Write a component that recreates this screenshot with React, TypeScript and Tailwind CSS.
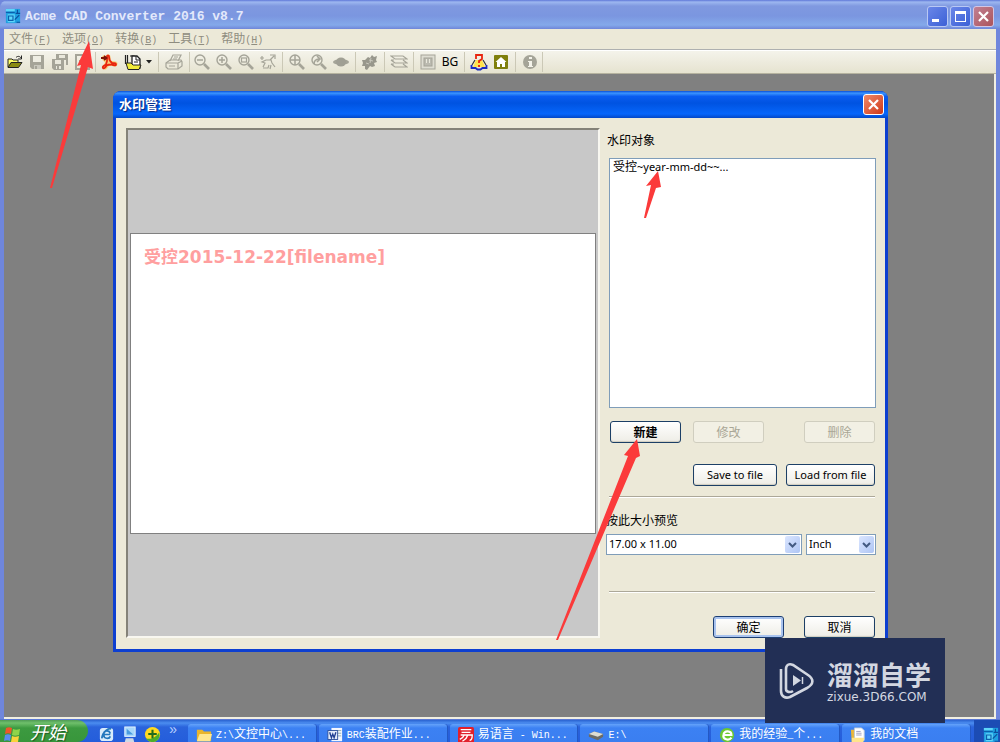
import React from "react";

const SONG = "font-['Liberation_Mono','Noto_Sans_CJK_SC',monospace]";
const UI = "font-['Noto_Sans','Noto_Sans_CJK_SC',sans-serif]";

function Icon({ children, size = 18 }: { children: React.ReactNode; size?: number }) {
  return (
    <svg width={size} height={size} viewBox="0 0 18 18" fill="none" className="shrink-0" aria-hidden="true">
      {children}
    </svg>
  );
}

const G = "#a5a498";

function AppLogo() {
  return (
    <Icon size={16}>
      <path d="M1 1h16v16H1z" fill="#1f9fe0" />
      <path d="M1 1h10v3H1zM3 7h8v9H3z" fill="#5fd6fa" />
      <path d="M1 5h10M4 9h5v5H4z" stroke="#0b5fae" strokeWidth="1.300" />
      <path d="M12 6h5M14 2v4M11 13l5-5M13 16h4" stroke="#0b4f9e" strokeWidth="1.300" />
    </Icon>
  );
}

const OpenIcon = () => (
  <Icon>
    <path d="M2 14V6h4l1 1h5v3" fill="#ffff66" stroke="#222" />
    <path d="M2 14.500l3-5h11l-3.500 5z" fill="#8a8a10" stroke="#222" />
    <path d="M10 4.500c2-2 4-1 5 .5M15.500 2.500V6H12" stroke="#222" />
  </Icon>
);
const SaveIcon = () => (
  <Icon>
    <path d="M2 2h14v14H4l-2-2z" fill={G} />
    <path d="M5 3h8v6H5z" fill="#eeede2" />
    <path d="M6 12h7v4H6z" fill="#c9c8bd" />
    <path d="M7 13h2v3H7z" fill={G} />
  </Icon>
);
const SaveAllIcon = () => (
  <Icon>
    <path d="M5 1h12v11h-2V7H5z" fill={G} />
    <path d="M8 2h6v3H8z" fill="#e9e8dc" />
    <path d="M1 6h12v11H3l-2-2z" fill={G} />
    <path d="M4 7h6v4H4zM5 13h5v3H5z" fill="#e9e8dc" />
    <path d="M6 13h2v3H6z" fill={G} />
  </Icon>
);
const ExportIcon = () => (
  <Icon>
    <path d="M2 2h9l4 4v10H2z" stroke={G} strokeWidth="2" />
    <path d="M5 8h5v5" stroke={G} strokeWidth="2" />
  </Icon>
);
const PdfIcon = () => (
  <Icon>
    <path d="M4 5l5 5 6 1M8 10l-3 4M8 9V4" stroke="#ffc04a" strokeWidth="5" strokeLinecap="round" opacity=".7" />
    <path d="M7 3.500c0-1.500 2-1.500 2 0 0 3 1 5 3 6.500 2 0 4 0 4 1.500s-2.500 1-4.500 0c-2 0-3.500 0-5 1-1 2-2.500 3.500-3.500 2.500s1-2.500 3-3.500c1-2 1.500-4 1-8z" stroke="#e8240f" strokeWidth="1.800" />
    <path d="M1 5h4M4 3l2.500 2L4 7" stroke="#7c1206" strokeWidth="1.800" />
  </Icon>
);
const BatchIcon = () => (
  <Icon>
    <path d="M1.500 2v9M3.500 2v10M6 3h4v10" stroke="#222" strokeWidth="1.200" />
    <path d="M8 3h5l3 3v9H8z" fill="#fff" stroke="#222" strokeWidth="1.300" />
    <path d="M12 3v4h4" stroke="#222" />
    <path d="M2 10h5l2 2h8l-2 4.500H4z" fill="#f1ec3b" stroke="#222" />
    <path d="M10 9h4" stroke="#222" />
  </Icon>
);
const PrintIcon = () => (
  <Icon>
    <path d="M5 8l3-6h8l-3 6M1 10l4-3h11l1 2v4l-4 3H3l-2-2z" stroke={G} strokeWidth="1.200" />
    <path d="M1 10h12v6M13 10l4-2" stroke={G} strokeWidth="1.200" />
    <path d="M9 4h4M8 6h4M4 13h6" stroke={G} />
  </Icon>
);
function Lens({ children }: { children?: React.ReactNode }) {
  return (
    <Icon>
      <circle cx="7" cy="7" r="5" stroke={G} strokeWidth="1.400" />
      <path d="M11 11l5 5" stroke={G} strokeWidth="2.600" />
      {children}
    </Icon>
  );
}
const PanIcon = () => (
  <Icon>
    <path d="M1 5h4M3 3v4M11 2h5v4M15 3l-4 4M4 14l2-4-3-1 4-2 5 0 1 3 3 4M4 15h5l1-3M12 12l-1 4" stroke={G} strokeWidth="1.200" />
  </Icon>
);
const OrbitIcon = () => (
  <Icon>
    <ellipse cx="9" cy="9" rx="8" ry="3" fill={G} />
    <ellipse cx="9" cy="9" rx="5" ry="4.500" fill="#a09f94" />
  </Icon>
);
const RegenIcon = () => (
  <Icon>
    <path d="M7 4l2 1 2-3 2 2 3-1-1 4 1 2-3 1 1 3-3 1-2-1-3 4-2-1 0-3-3 0 1-3-1-3 3 0z" fill="#98978c" />
    <path d="M8 7l4 1M10 5l-1 5M5 10l3 1" stroke="#c8c7bc" />
  </Icon>
);
const LayersIcon = () => (
  <Icon>
    <path d="M1 3h12l4 3H5zM1 7h3M1 11h3M5 10h12l-4-3M5 14h12l-4-3M1 7l4 3M1 11l4 3" stroke={G} strokeWidth="1.200" />
  </Icon>
);
const FrameIcon = () => (
  <Icon>
    <rect x="2" y="2" width="14" height="14" fill="#deddd2" stroke={G} />
    <rect x="5" y="5" width="8" height="8" fill="#bbbab0" stroke={G} />
    <path d="M7.500 6v4M10.500 6v4" stroke="#e9e8dc" />
  </Icon>
);
const RegisterIcon = () => (
  <Icon>
    <path d="M3 14l3-7h6l3 7z" fill="#ffe34d" />
    <path d="M5 7l-3 5M13 7l3 5" stroke="#333" strokeWidth="1.200" />
    <path d="M6 6V2h6v4L9 8v2M9 12v2" stroke="#e8240f" strokeWidth="1.800" />
    <path d="M1.500 12v3h4l2 1.500h3l2-1.500h4v-3" stroke="#1b2cc0" strokeWidth="1.800" />
  </Icon>
);
const HomeIcon = () => (
  <Icon>
    <rect x="2" y="2" width="14" height="14" rx="1" fill="#7f7f0c" />
    <path d="M9 4l5.500 5H13v5h-3v-3H8v3H5V9H3.500z" fill="#fff" />
  </Icon>
);
const InfoIcon = () => (
  <Icon>
    <circle cx="9" cy="9" r="7" fill={G} />
    <path d="M8 4h3v2H8zM7 8h4v5h1v1H7v-1h1V9H7z" fill="#f4f3ea" />
  </Icon>
);

function Tool({ label, wide, children }: { label: string; wide?: string; children: React.ReactNode }) {
  return (
    <button type="button" aria-label={label} className={`flex h-full shrink-0 items-center justify-center ${wide ?? "w-[22px]"}`}>
      {children}
    </button>
  );
}
const Sep = ({ tight }: { tight?: boolean }) => (
  <span className={`h-5 w-px shrink-0 bg-[#cbc8b6] ${tight ? "mx-px" : "mx-[3px]"}`} />
);

function MenuItem({ text, hot }: { text: string; hot: string }) {
  return (
    <button type="button" className="flex items-baseline">
      <span className="text-xs">{text}</span>
      <span className="text-[10px]">
        (<u>{hot}</u>)
      </span>
    </button>
  );
}

function Btn({ children, kind = "normal", width }: { children: React.ReactNode; kind?: "normal" | "hot" | "disabled"; width: string }) {
  const look =
    kind === "disabled"
      ? "border-[#d0cebf] bg-[#f2f0e4] text-[#a9a695]"
      : kind === "hot"
        ? "border-[#1c3f75] bg-gradient-to-b from-white to-[#eeede6] text-black shadow-[inset_0_0_0_2px_#a9c3ee]"
        : "border-[#1c3f66] bg-gradient-to-b from-white to-[#eeede6] text-black shadow-[inset_0_-1px_1px_#d0ccbf]";
  return (
    <button
      type="button"
      disabled={kind === "disabled"}
      className={`flex h-[22px] shrink-0 items-center justify-center rounded-[3px] border pt-px ${look} ${width}`}
    >
      {children}
    </button>
  );
}

function Combo({ id, label, value, grow }: { id: string; label: string; value: string; grow?: boolean }) {
  return (
    <div className={`relative h-[21px] ${grow ? "flex-1" : "w-[70px]"}`}>
      <select
        id={id}
        aria-label={label}
        className="h-full w-full appearance-none rounded-none border border-[#7f9db9] bg-white pr-5 pl-[2px] text-[11px] text-black"
      >
        <option>{value}</option>
      </select>
      <span className="pointer-events-none absolute top-[2px] right-[2px] flex h-[17px] w-[15px] items-center justify-center rounded-[2px] bg-gradient-to-br from-[#dbe6ff] to-[#aec5f4]">
        <svg width="9" height="6" viewBox="0 0 9 6" fill="none">
          <path d="M1 1l3.500 3.500L8 1" stroke="#435a82" strokeWidth="2" />
        </svg>
      </span>
    </div>
  );
}

const Rule = () => <hr className="mr-px ml-[3px] h-[2px] border-0 border-t border-b border-t-[#aca899] border-b-white" />;

function Close({ active }: { active?: boolean }) {
  return (
    <button
      type="button"
      aria-label="关闭"
      className={`flex size-[21px] items-center justify-center rounded-[3px] border ${
        active ? "border-white bg-gradient-to-br from-[#f08868] to-[#cf3512]" : "border-[#d3c6e4] bg-gradient-to-br from-[#c08094] to-[#ac545a]"
      }`}
    >
      <svg width="13" height="13" viewBox="0 0 13 13">
        <path d="M2 2l9 9M11 2l-9 9" stroke="#fff" strokeWidth="2.200" />
      </svg>
    </button>
  );
}

function Dialog() {
  return (
    <section className={`flex h-[561px] w-full max-w-[775px] flex-col rounded-t-lg bg-[#0d3fd0] ${UI}`}>
      <header className="flex h-[27px] shrink-0 items-center justify-between rounded-t-lg bg-[linear-gradient(180deg,#0a4fd8_0%,#3a94ff_8%,#0a5cf0_20%,#0053e1_45%,#0666fb_85%,#0347c6_100%)] pr-[4px] pl-[6px]">
        <h2 className="text-[13px] leading-none font-bold text-white [text-shadow:1px_1px_1px_#0a2a80]">水印管理</h2>
        <Close active />
      </header>
      <div className="mx-[3px] mb-[3px] flex min-h-0 flex-1 bg-[#ece9d8] pt-[10px] pr-[9px] pb-[11px] pl-[10px] text-xs text-black">
        <div className="flex min-w-0 flex-1 flex-col justify-center border-2 border-t-[#848278] border-r-[#f8f7f0] border-b-[#f8f7f0] border-l-[#848278] bg-[#c8c8c8] px-[2px]">
          <div className="h-[301px] border border-[#808080] bg-white px-[13px] pt-[10px]">
            <p className="font-['DejaVu_Sans','Noto_Sans_CJK_SC',sans-serif] text-[17px] leading-[26px] font-bold whitespace-nowrap text-[#ff9f9f]">
              受控2015-12-22[filename]
            </p>
          </div>
        </div>
        <div className="ml-[6px] flex w-[270px] shrink-0 flex-col">
          <h3 id="objects" className="mt-[5px] ml-px leading-4">
            水印对象
          </h3>
          <ul aria-labelledby="objects" className="mt-[9px] ml-[3px] h-[250px] border border-[#7f9db9] bg-white px-[3px]">
            <li className="text-[11px] leading-4">
              <span className="text-xs">受控</span>~year-mm-dd~~...
            </li>
          </ul>
          <div className="mt-[13px] mr-px ml-[4px] flex">
            <Btn width="w-[71px]">
              <span className="font-bold">新建</span>
            </Btn>
            <span className="w-3" />
            <Btn width="w-[71px]" kind="disabled">
              修改
            </Btn>
            <span className="flex-1" />
            <Btn width="w-[71px]" kind="disabled">
              删除
            </Btn>
          </div>
          <div className="mt-[21px] mr-px flex justify-end gap-[9px] text-[11px]">
            <Btn width="w-[84px]">Save to file</Btn>
            <Btn width="w-[89px]">Load from file</Btn>
          </div>
          <div className="mt-[10px]">
            <Rule />
          </div>
          <label htmlFor="size" className="mt-[15px] leading-4">
            按此大小预览
          </label>
          <div className="mt-[5px] flex gap-1">
            <Combo id="size" label="按此大小预览" value="17.00 x 11.00" grow />
            <Combo id="unit" label="单位" value="Inch" />
          </div>
          <div className="mt-[36px]">
            <Rule />
          </div>
          <div className="mt-auto mr-px flex justify-end gap-5">
            <Btn width="w-[71px]" kind="hot">
              确定
            </Btn>
            <Btn width="w-[71px]">取消</Btn>
          </div>
        </div>
      </div>
    </section>
  );
}

function Task({ icon, children }: { icon: React.ReactNode; children: React.ReactNode }) {
  return (
    <button
      type="button"
      className="mt-1 flex h-5 min-w-0 flex-1 items-center gap-1 rounded-t-[3px] bg-gradient-to-b from-[#65a3fa] via-[#3c81f3] via-20% to-[#3a7ef0] pt-[2px] pl-2 whitespace-nowrap shadow-[inset_-1px_0_0_#2358c4]"
    >
      {icon}
      <span className="text-xs leading-5">{children}</span>
    </button>
  );
}
const L = ({ children }: { children: React.ReactNode }) => <span className="text-[10px] whitespace-pre">{children}</span>;

function Taskbar() {
  return (
    <footer className={`flex h-[22px] shrink-0 overflow-hidden bg-[linear-gradient(180deg,#2a62d0_0,#4b8df0_3px,#2a63dc_7px,#245ddb_22px)] text-white ${SONG}`}>
      <button
        type="button"
        className="flex w-[88px] shrink-0 items-center gap-2 rounded-r-xl bg-[linear-gradient(180deg,#4f9a55_0,#6fc06b_3px,#3c9a40_8px,#38963b_22px)] pt-[5px] pl-1"
      >
        <Icon>
          <path d="M2 3c2-1 4-1 6 0L7 9c-2-1-4-1-6 0z" fill="#f0562a" />
          <path d="M9 4c2 1 4 1 7 0l-1 6c-3 1-5 1-7 0z" fill="#8fd44a" />
          <path d="M1 10c2-1 4-1 6 0l-1 6c-2-1-4-1-6 0z" fill="#5b8cf0" />
          <path d="M8 11c2 1 4 1 7 0l-1 6c-3 1-5 1-7 0z" fill="#fbd33a" />
        </Icon>
        <span className="text-[18px] leading-none italic [text-shadow:1px_1px_1px_#1d5a20]">开始</span>
      </button>
      <div className="flex w-[100px] shrink-0 items-start gap-[6px] pt-[6px] pl-[10px]">
        <Icon size={17}>
          <rect x="2" y="2" width="14" height="14" rx="3" fill="#d9ecfb" />
          <path d="M13 9H6c0-5 6-5 7-1M6 9c0 5 6 5 7 2M14 3c-3-1-9 3-10 10" stroke="#2478bd" strokeWidth="1.800" />
        </Icon>
        <Icon size={17}>
          <rect x="4" y="1" width="11" height="10" fill="#a8d8fb" stroke="#e4f3ff" />
          <path d="M6 3l7 6H6z" fill="#4a9be0" />
          <path d="M5 13h8l1 4H4z" fill="#cfd9e4" />
        </Icon>
        <Icon size={17}>
          <circle cx="9" cy="9" r="8" fill="#ffda1f" />
          <path d="M2 13c5 2 11-1 14-6 3 9-9 14-14 6z" fill="#4cae2c" />
          <path d="M9 4v9M4.500 8.500h9" stroke="#226b1d" strokeWidth="2.200" />
        </Icon>
        <span className="ml-[2px] text-sm leading-[8px] text-[#b4ceff]">»</span>
      </div>
      <nav className="flex min-w-0 flex-1 gap-[2px]">
        <Task
          icon={
            <Icon size={16}>
              <path d="M1 3h6l2 2h8v11H1z" fill="#e9b52c" />
              <path d="M1 16L4 8h14l-2 8z" fill="#ffe78f" />
            </Icon>
          }
        >
          <L>Z:\</L>文控中心<L>\...</L>
        </Task>
        <Task
          icon={
            <Icon size={16}>
              <path d="M5 1h12v15H5z" fill="#f4f7ff" />
              <path d="M12 4h4M12 7h4M12 10h4" stroke="#8aa" />
              <rect x="1" y="4" width="11" height="10" fill="#e3ecfa" stroke="#2a4e9a" />
              <path d="M3 6l2 6 1.500-4L8 12l2-6" stroke="#1f3f92" strokeWidth="1.500" />
            </Icon>
          }
        >
          <L>BRC</L>装配作业<L>...</L>
        </Task>
        <Task
          icon={
            <Icon size={16}>
              <rect width="18" height="18" rx="2" fill="#e2202c" />
              <path d="M3 3h12M4 6h10M3 9h13c0 4-1 6-3 6M7 9c-1 3-3 4-5 5M11 9c-1 4-3 5-6 7" stroke="#fff" strokeWidth="1.500" />
            </Icon>
          }
        >
          易语言<L> - Win...</L>
        </Task>
        <Task
          icon={
            <Icon size={16}>
              <path d="M1 8l6-3 10 3v3l-6 4-10-4z" fill="#6b6b66" />
              <path d="M1 8l6-3 10 3-6 3z" fill="#dcdcd2" />
            </Icon>
          }
        >
          <L>E:\</L>
        </Task>
        <Task
          icon={
            <Icon size={16}>
              <circle cx="9" cy="9" r="8" fill="#6cc930" />
              <path d="M14 12c-3 4-10 2-9-3 1-6 9-5 9 0H6" stroke="#fff" strokeWidth="2.400" />
            </Icon>
          }
        >
          我的经验<L>_</L>个<L>...</L>
        </Task>
        <Task
          icon={
            <Icon size={16}>
              <path d="M1 3h5l1 14H2z" fill="#eab63a" />
              <path d="M5 1h8l3 3v11H5z" fill="#fff" stroke="#b9c8d8" />
              <path d="M2 12h14l-1 5H2z" fill="#ffe48a" />
              <path d="M7 5h5M7 7h6M7 9h6" stroke="#99b" />
            </Icon>
          }
        >
          我的文档
        </Task>
      </nav>
      <div className="ml-[3px] flex w-[26px] shrink-0 items-start bg-[#1c4cb4] pt-[7px] pl-[9px]">
        <AppLogo />
      </div>
    </footer>
  );
}

export default function App() {
  return (
    <div className="relative flex h-screen min-h-[742px] flex-col overflow-hidden bg-[#6f86dc]">
      <header className="flex h-[29px] shrink-0 items-center justify-between rounded-tl-lg bg-[linear-gradient(180deg,#5f78d8_0,#9db7f0_2px,#8099e0_6px,#7b96e0_16px,#84a9ea_25px,#6f86d8_29px)] pt-[3px] pr-[6px] pl-[5px]">
        <div className="flex items-center gap-1">
          <AppLogo />
          <h1 className={`text-[13px] leading-none font-bold whitespace-pre text-[#e3e9fb] ${SONG}`}>Acme CAD Converter 2016 v8.7</h1>
        </div>
        <div className="flex gap-[2px]">
          <button type="button" aria-label="最小化" className="flex size-[21px] items-end rounded-[3px] border border-[#b9c8f4] bg-gradient-to-br from-[#6a86e8] to-[#3c60d6] pb-1 pl-1">
            <span className="h-[3px] w-[7px] bg-white" />
          </button>
          <button type="button" aria-label="最大化" className="flex size-[21px] items-center justify-center rounded-[3px] border border-[#b9c8f4] bg-gradient-to-br from-[#6a86e8] to-[#3c60d6]">
            <span className="size-[11px] border border-t-[3px] border-white" />
          </button>
          <Close />
        </div>
      </header>

      <div className="mr-[4px] ml-[4px] flex min-h-0 flex-1 flex-col">
        <nav className={`flex h-5 shrink-0 items-center gap-[11px] bg-[#ece9d8] pt-[2px] pl-[5px] text-[#8f8d80] ${SONG}`}>
          <MenuItem text="文件" hot="F" />
          <MenuItem text="选项" hot="O" />
          <MenuItem text="转换" hot="B" />
          <MenuItem text="工具" hot="T" />
          <MenuItem text="帮助" hot="H" />
        </nav>
        <div className="flex h-[25px] shrink-0 items-center border-t border-b border-t-[#aeb0b0] border-b-[#b5b29f] bg-gradient-to-b from-[#f5f4ec] to-[#e6e3d0] shadow-[inset_0_1px_0_#fff]">
          <Tool label="打开"><OpenIcon /></Tool>
          <Tool label="保存"><SaveIcon /></Tool>
          <Tool label="全部保存" wide="w-[23px]"><SaveAllIcon /></Tool>
          <Tool label="另存" wide="w-[23px]"><ExportIcon /></Tool>
          <Sep tight />
          <Tool label="PDF" wide="w-[24px]"><PdfIcon /></Tool>
          <Tool label="批量转换" wide="w-[36px]">
            <BatchIcon />
            <svg width="13" height="4" viewBox="0 0 13 4"><path d="M4 0h6L7 3.500z" fill="#222" /></svg>
          </Tool>
          <Sep tight />
          <Tool label="打印" wide="w-[28px]"><PrintIcon /></Tool>
          <Sep tight />
          <Tool label="缩小"><Lens><path d="M4 7h6" stroke={G} strokeWidth="1.500" /></Lens></Tool>
          <Tool label="放大"><Lens><path d="M4 7h6M7 4v6" stroke={G} strokeWidth="1.500" /></Lens></Tool>
          <Tool label="窗口缩放"><Lens><rect x="4.500" y="5" width="5" height="4" stroke={G} strokeWidth="1.200" /></Lens></Tool>
          <Tool label="平移"><PanIcon /></Tool>
          <Sep />
          <Tool label="全图"><Lens><path d="M2 7h10M7 2v10" stroke={G} strokeWidth="1.500" /></Lens></Tool>
          <Tool label="上一视图"><Lens><path d="M4 11c0-4 2-5 6-5M7 3l3 3-3 3" stroke={G} strokeWidth="1.600" /></Lens></Tool>
          <Tool label="三维"><OrbitIcon /></Tool>
          <Sep />
          <Tool label="重生成"><RegenIcon /></Tool>
          <Sep />
          <Tool label="图层"><LayersIcon /></Tool>
          <Sep />
          <Tool label="布局"><FrameIcon /></Tool>
          <Tool label="背景"><span className={`text-xs leading-none text-black ${UI}`}>BG</span></Tool>
          <Sep />
          <Tool label="注册"><RegisterIcon /></Tool>
          <Tool label="主页"><HomeIcon /></Tool>
          <Sep />
          <Tool label="关于"><InfoIcon /></Tool>
          <Sep tight />
        </div>
        <main className="flex min-h-0 flex-1 items-start justify-center border-r-2 border-b-2 border-r-[#f1efe2] border-b-[#f1efe2] bg-[#808080] pt-[17px] pl-[3px]">
          <Dialog />
        </main>
      </div>
      <div className="h-px shrink-0 bg-[#5a78d4]" />
      <Taskbar />

      <svg className="pointer-events-none absolute top-0 left-0" width="1000" height="742" viewBox="0 0 1000 742" fill="#fb3a3a" aria-hidden="true">
        <path d="M89 41L77 66l4-1L50 188l2 0L88 67l5 2z" />
        <path d="M658 171L646 186l5-1L644 218l2 0L656 188l5-1z" />
        <path d="M637 439L624 455l4 1L556 640l2 0L636 458l4-2z" />
      </svg>

      <aside className="absolute right-[55px] bottom-[19px] flex h-[85px] w-[180px] items-center gap-[12px] bg-[#222f55] pl-[14px] text-[#d3d7e1]">
        <svg width="36" height="38" viewBox="0 0 36 38" fill="none" stroke="currentColor" aria-hidden="true">
          <path d="M2 7v22c0 5 4 8 9 6l17-9c7-4 7-9 1-13L14 3C10 1 7 3 7 7v20c0 3 4 4 7 2" strokeWidth="2.600" />
          <path d="M14 13l8 5.500-8 5.500z" fill="currentColor" stroke="none" />
          <path d="M23.500 15v7" strokeWidth="1.500" />
        </svg>
        <div className="flex flex-col gap-[2px]">
          <p className="font-['Noto_Sans_CJK_SC',sans-serif] text-[26px] leading-[30px] font-bold">溜溜自学</p>
          <p className="font-['DejaVu_Sans',sans-serif] text-xs leading-[12px] whitespace-nowrap">zixue.3D66.COM</p>
        </div>
      </aside>
    </div>
  );
}
